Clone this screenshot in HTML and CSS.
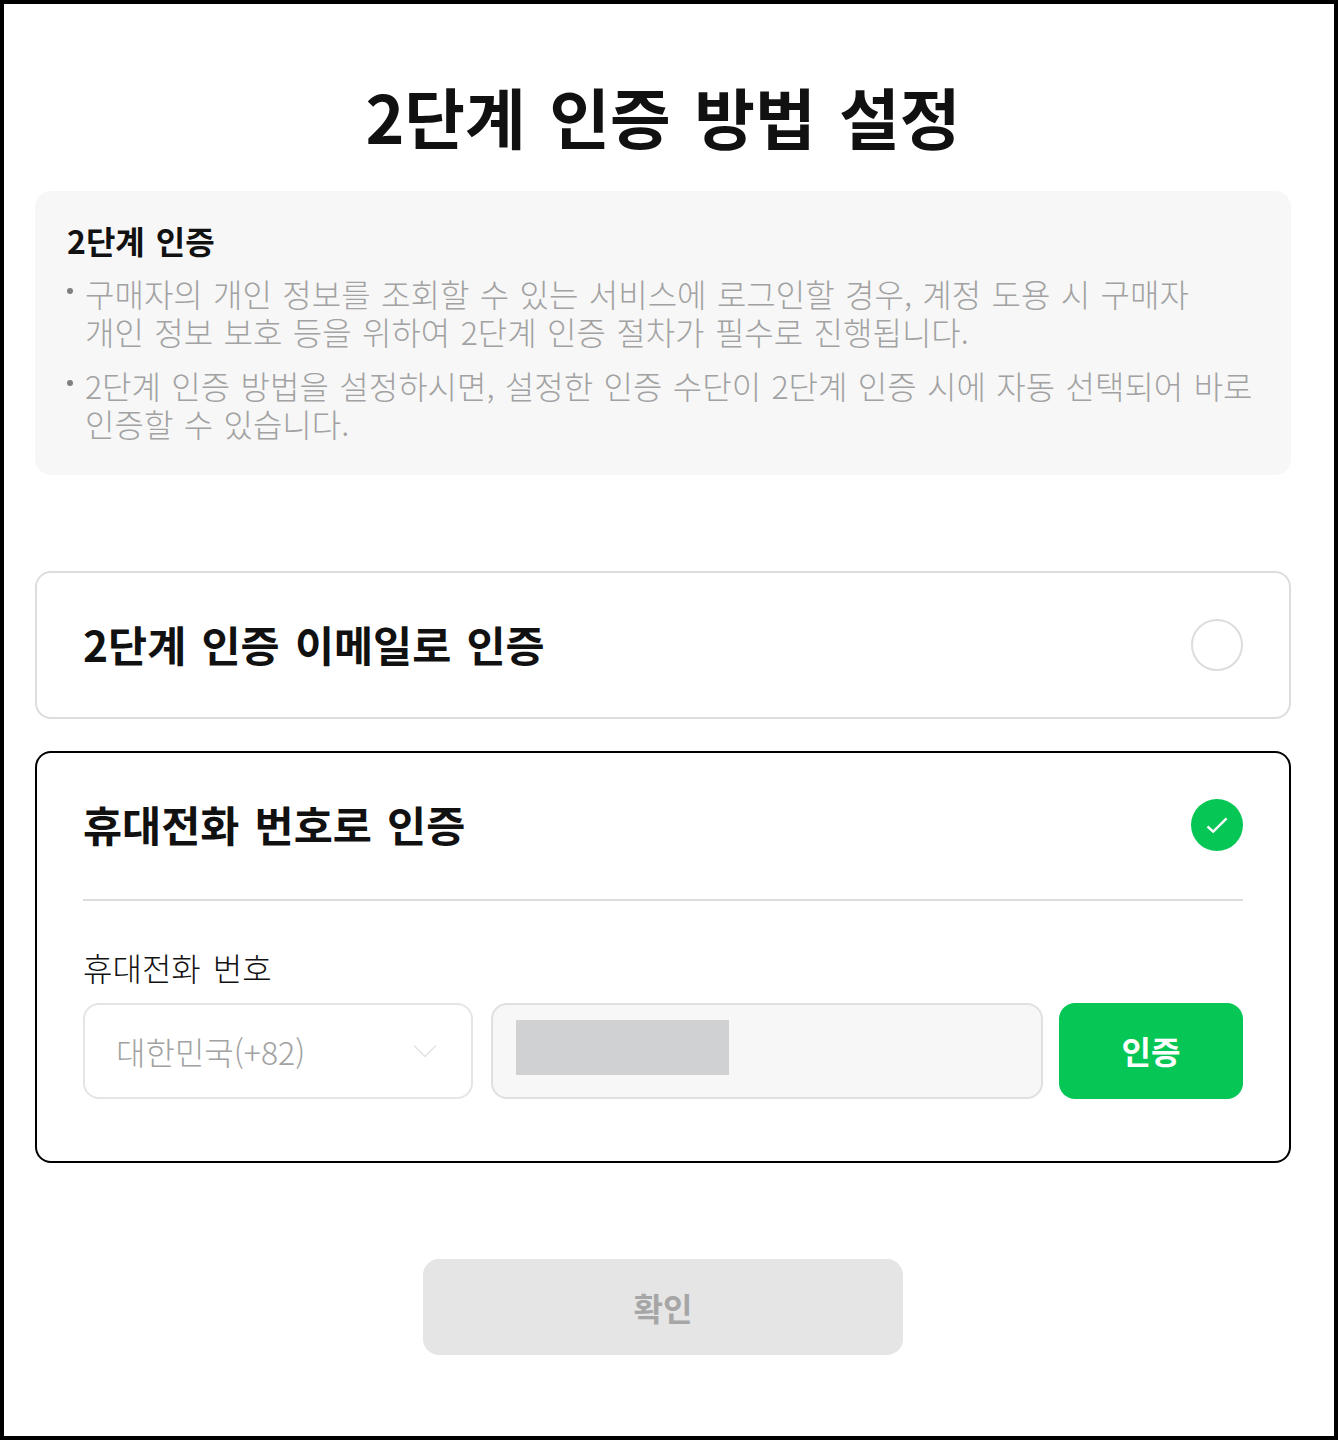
FILE: index.html
```html
<!DOCTYPE html>
<html lang="ko">
<head>
  <meta charset="UTF-8" />
  <title>2단계 인증 방법 설정</title>
  <link rel="stylesheet" href="styles.css">
</head>
<body>
  <main class="page">
    <h1 class="title">2단계 인증 방법 설정</h1>

    <section class="notice">
      <h2 class="notice-title">2단계 인증</h2>
      <ul class="notice-list">
        <li>구매자의 개인 정보를 조회할 수 있는 서비스에 로그인할 경우, 계정 도용 시 구매자<br>개인 정보 보호 등을 위하여 2단계 인증 절차가 필수로 진행됩니다.</li>
        <li>2단계 인증 방법을 설정하시면, 설정한 인증 수단이 2단계 인증 시에 자동 선택되어 바로<br>인증할 수 있습니다.</li>
      </ul>
    </section>

    <section class="option">
      <div class="option-head">
        <h3 class="option-title">2단계 인증 이메일로 인증</h3>
        <span class="radio"></span>
      </div>
    </section>

    <section class="option option-active">
      <div class="option-head">
        <h3 class="option-title">휴대전화 번호로 인증</h3>
        <span class="radio radio-on">
          <svg width="24" height="24" viewBox="0 0 24 24" fill="none"><path d="M2.5 13.5 L8.2 18.6 L21.6 5.4" stroke="#fff" stroke-width="2.4"/></svg>
        </span>
      </div>
      <div class="phone">
        <label class="phone-label">휴대전화 번호</label>
        <div class="phone-row">
          <div class="country">
            <span>대한민국(+82)</span>
            <svg width="24" height="14" viewBox="0 0 24 14" fill="none"><path d="M1 1.5 L12 12.5 L23 1.5" stroke="#e2e2e2" stroke-width="1.3"/></svg>
          </div>
          <div class="number"><span class="masked"></span></div>
          <button class="btn-verify" type="button">인증</button>
        </div>
      </div>
    </section>

    <button class="btn-confirm" type="button" disabled>확인</button>
  </main>
</body>
</html>
```

FILE: styles.css
```css
* {
  box-sizing: border-box;
}

body {
  margin: 0;
  background-color: #fff;
  color: #111;
  font-family: "Noto Sans CJK KR", "Noto Sans", sans-serif;
}

.page {
  height: 1440px;
  border: 4px solid #000;
  padding: 0 43px 0 31px;
  display: flex;
  flex-direction: column;
}

.title {
  margin: 69px 0 0;
  height: 118px;
  font-size: 66px;
  line-height: 85px;
  font-weight: 700;
  word-spacing: 5px;
  text-align: center;
}

.notice {
  height: 284px;
  padding: 27px 33px 0 32px;
  background-color: #f7f7f7;
  border-radius: 16px;
}

.notice-title {
  margin: 0 0 12px;
  font-size: 32px;
  line-height: 44px;
  font-weight: 700;
  word-spacing: 2px;
}

.notice-list {
  margin: 0;
  padding: 0;
  list-style: none;
  color: #a2a2a2;
  font-size: 32px;
  line-height: 38px;
  font-weight: 300;
  word-spacing: 1.4px;
}

.notice-list li {
  position: relative;
  padding-left: 18px;
  margin-bottom: 16px;
  white-space: nowrap;
}

.notice-list li::before {
  content: "";
  position: absolute;
  left: 0;
  top: 14px;
  width: 6px;
  height: 6px;
  border-radius: 50%;
  background-color: #808080;
}

.option {
  margin-top: 96px;
  border: 2px solid #ddd;
  border-radius: 16px;
  padding: 46px 46px 0;
  height: 148px;
}

.option-active {
  margin-top: 32px;
  height: 412px;
  border-color: #000;
}

.option-head {
  display: flex;
  justify-content: space-between;
  align-items: center;
  height: 52px;
}

.option-title {
  margin: -2px 0 0;
  font-size: 42.5px;
  line-height: 52px;
  font-weight: 700;
  word-spacing: 3.3px;
}

.radio {
  width: 52px;
  height: 52px;
  border: 2px solid #ddd;
  border-radius: 50%;
}

.radio-on {
  display: flex;
  align-items: center;
  justify-content: center;
  border: none;
  background-color: #06c755;
}

.phone {
  margin-top: 48px;
  padding-top: 47px;
  border-top: 2px solid #ddd;
}

.phone-label {
  display: block;
  font-size: 32px;
  line-height: 38px;
  font-weight: 300;
  word-spacing: 3px;
}

.phone-row {
  display: flex;
  margin-top: 17px;
  height: 96px;
}

.country {
  width: 390px;
  border: 2px solid #e5e5e5;
  border-radius: 16px;
  padding: 0 34px 0 31px;
  display: flex;
  align-items: center;
  justify-content: space-between;
  color: #a2a2a2;
  font-size: 32px;
  font-weight: 300;
}

.number {
  width: 552px;
  margin-left: 18px;
  padding: 15px 0 0 23px;
  background-color: #f7f7f7;
  border: 2px solid #e0e0e0;
  border-radius: 16px;
}

.masked {
  display: block;
  width: 213px;
  height: 55px;
  background-color: #d0d1d3;
}

.btn-verify {
  width: 184px;
  margin-left: 16px;
  padding-bottom: 3px;
  border: none;
  border-radius: 16px;
  background-color: #06c755;
  color: #fff;
  font-family: inherit;
  font-size: 32px;
  font-weight: 700;
}

.btn-confirm {
  align-self: center;
  width: 480px;
  height: 96px;
  margin-top: 96px;
  border: none;
  border-radius: 16px;
  background-color: #e5e5e5;
  color: #a6a6a6;
  font-family: inherit;
  font-size: 32px;
  font-weight: 700;
}
```
